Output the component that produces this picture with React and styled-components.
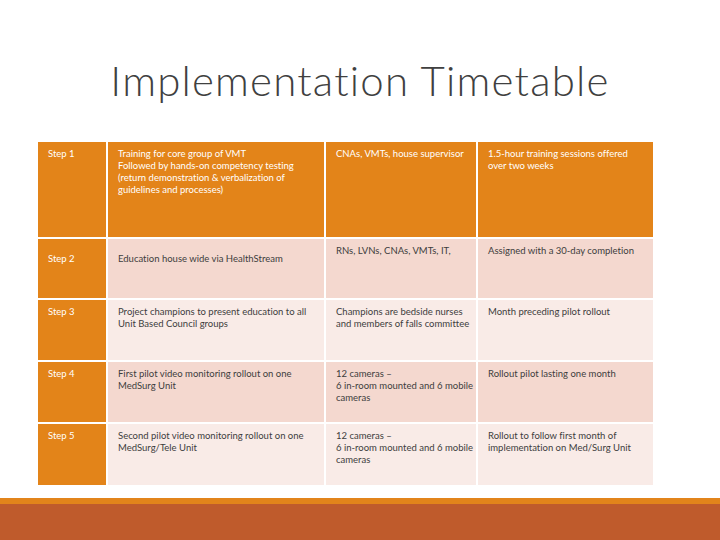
import styled, { createGlobalStyle } from 'styled-components'

const GlobalStyle = createGlobalStyle`
  html, body { margin: 0; padding: 0; background: #fff; }
  #root { width: 720px; height: 540px; }
`

const rows = [
  {
    step: 'Step 1',
    lead: true,
    height: 95,
    cells: [
      ['Training for core group of VMT', 'Followed by hands-on competency testing', '(return demonstration & verbalization of', 'guidelines and processes)'],
      ['CNAs, VMTs, house supervisor'],
      ['1.5-hour training sessions offered', 'over two weeks'],
    ],
  },
  {
    step: 'Step 2',
    tone: 'dark',
    low: true,
    height: 59,
    cells: [
      ['Education house wide via HealthStream'],
      ['RNs, LVNs, CNAs, VMTs, IT,'],
      ['Assigned with a 30-day completion'],
    ],
  },
  {
    step: 'Step 3',
    tone: 'light',
    height: 60,
    cells: [
      ['Project champions to present education to all', 'Unit Based Council groups'],
      ['Champions are bedside nurses', 'and members of falls committee'],
      ['Month preceding pilot rollout'],
    ],
  },
  {
    step: 'Step 4',
    tone: 'dark',
    height: 60,
    cells: [
      ['First pilot video monitoring rollout on one', 'MedSurg Unit'],
      ['12 cameras \u2013', '6 in-room mounted and 6 mobile', 'cameras'],
      ['Rollout pilot lasting one month'],
    ],
  },
  {
    step: 'Step 5',
    tone: 'light',
    height: 61,
    cells: [
      ['Second pilot video monitoring rollout on one', 'MedSurg/Tele Unit'],
      ['12 cameras \u2013', '6 in-room mounted and 6 mobile', 'cameras'],
      ['Rollout to follow first month of', 'implementation on Med/Surg Unit'],
    ],
  },
]

const fills = { orange: '#e38419', dark: '#f4d8cf', light: '#f9ebe7' }

const App = () => (
  <Page>
    <GlobalStyle />
    <TitleBar>
      <Title>Implementation Timetable</Title>
    </TitleBar>
    <Table>
      {rows.map(row => (
        <Row key={row.step} $height={row.height}>
          <Cell $fill="orange" $low={row.low}>{row.step}</Cell>
          {row.cells.map((lines, i) => (
            <Cell
              key={i}
              $fill={row.lead ? 'orange' : row.tone}
              $low={row.low && i === 0}
            >
              {lines.map(l => <Line key={l}>{l}</Line>)}
            </Cell>
          ))}
        </Row>
      ))}
    </Table>
    <Spacer />
    <Footer />
  </Page>
)

const Page = styled.div`
  width: 720px;
  height: 540px;
  display: flex;
  flex-direction: column;
  font-family: Lato, 'Liberation Sans', sans-serif;
`

const TitleBar = styled.div`
  height: 142px;
  display: flex;
  align-items: flex-start;
  justify-content: center;
`

const Title = styled.h1`
  margin: 54px 0 0;
  font-family: Lato, sans-serif;
  font-weight: 300;
  font-size: 42px;
  line-height: 52px;
  letter-spacing: 1.2px;
  font-variant-ligatures: none;
  color: #404040;
`

const Table = styled.div`
  margin-left: 38px;
  width: 615px;
  display: flex;
  flex-direction: column;
  gap: 2px;
`

const Row = styled.div`
  display: grid;
  grid-template-columns: 68px 216px 150px 175px;
  gap: 2px;
  height: ${p => p.$height}px;
`

const Cell = styled.div`
  background: ${p => fills[p.$fill]};
  color: ${p => (p.$fill === 'orange' ? '#fff' : '#3d3d3d')};
  padding: ${p => (p.$low ? '14px' : '6px')} 6px 0 10px;
  font-size: 9.5px;
  line-height: 12px;
  font-variant-ligatures: none;
`

const Line = styled.div`
  white-space: nowrap;
`

const Spacer = styled.div`
  flex: 1;
`

const Footer = styled.div`
  height: 36px;
  background: #bf5b2c;
  border-top: 6px solid #e2841b;
`

export default App
